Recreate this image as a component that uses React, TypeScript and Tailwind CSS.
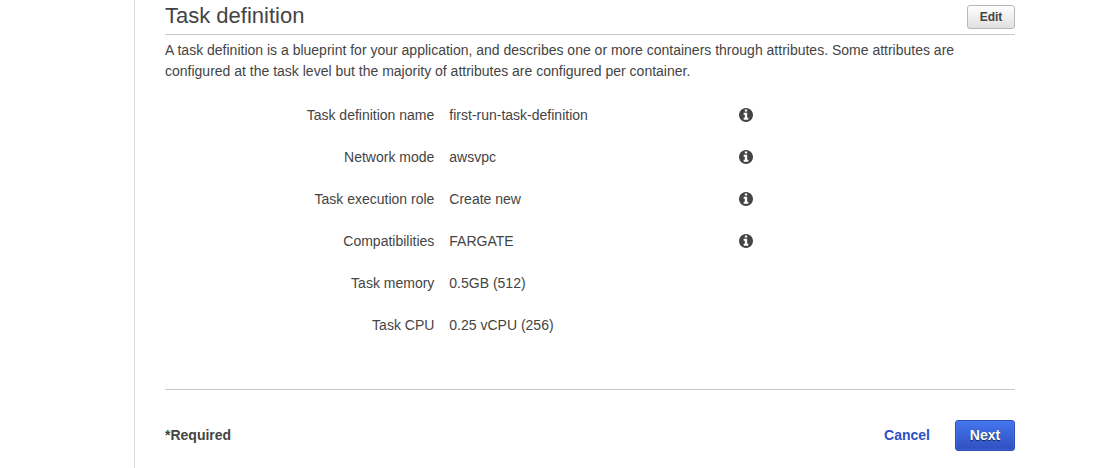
const attributes = [
  { label: 'Task definition name', value: 'first-run-task-definition', info: true },
  { label: 'Network mode', value: 'awsvpc', info: true },
  { label: 'Task execution role', value: 'Create new', info: true },
  { label: 'Compatibilities', value: 'FARGATE', info: true },
  { label: 'Task memory', value: '0.5GB (512)', info: false },
  { label: 'Task CPU', value: '0.25 vCPU (256)', info: false },
];

function InfoIcon() {
  return (
    <svg viewBox="0 0 1536 1536" fill="currentColor" className="size-[14px]" aria-hidden="true">
      <path d="M1024 1248v-160q0-14-9-23t-23-9h-96V544q0-14-9-23t-23-9H544q-14 0-23 9t-9 23v160q0 14 9 23t23 9h96v320h-96q-14 0-23 9t-9 23v160q0 14 9 23t23 9h448q14 0 23-9t9-23zM896 352V192q0-14-9-23t-23-9H672q-14 0-23 9t-9 23v160q0 14 9 23t23 9h192q14 0 23-9t9-23zm640 416q0 209-103 385.500T1153.500 1433 768 1536t-385.500-103T103 1153.500 0 768t103-385.500T382.500 103 768 0t385.500 103T1433 382.500 1536 768z" />
    </svg>
  );
}

function TaskDefinition() {
  return (
    <section>
      <div className="flex h-[35px] items-start justify-between border-b border-[#c8c8c8]">
        <h2 className="text-[22px] leading-8">Task definition</h2>
        <button
          type="button"
          className="mt-[5px] h-6 w-12 rounded-[3px] border border-[#b8b8b8] bg-gradient-to-b from-white to-[#e0e0e0] text-xs font-bold"
        >
          Edit
        </button>
      </div>

      <p className="mt-[5px]">
        A task definition is a blueprint for your application, and describes one or more containers through attributes.
        Some attributes are configured at the task level but the majority of attributes are configured per container.
      </p>

      <dl className="mt-3">
        {attributes.map((attribute) => (
          <div key={attribute.label} className="grid h-[42px] grid-cols-3 items-center">
            <dt className="pr-[14px] text-right">{attribute.label}</dt>
            <dd className="pl-px">{attribute.value}</dd>
            {attribute.info && (
              <dd className="pl-[7px]">
                <button type="button" aria-label={`About ${attribute.label}`} className="block">
                  <InfoIcon />
                </button>
              </dd>
            )}
          </div>
        ))}
      </dl>
    </section>
  );
}

export default function App() {
  return (
    <div className="flex min-h-screen bg-white font-['Liberation_Sans',Arial,sans-serif] text-sm leading-[21px] text-[#444]">
      <div className="w-[134px] shrink-0" />
      <main className="flex-1 border-l border-[#ddd] pr-[91px] pl-[30px]">
        <TaskDefinition />

        <footer className="mt-[43px] flex items-center justify-between border-t border-[#c8c8c8] pt-[30px]">
          <strong>*Required</strong>
          <div className="flex items-center gap-[25px]">
            <a href="#" className="font-bold text-[#2f4fc4]">
              Cancel
            </a>
            <button
              type="button"
              className="h-[31px] w-[60px] rounded-[3px] border border-[#2b4bb5] bg-gradient-to-b from-[#4476ee] to-[#304fc0] font-bold text-white shadow-[inset_0_0_0_1px_rgba(90,140,250,0.3)] [text-shadow:0_1px_1px_rgba(0,0,0,0.6)]"
            >
              Next
            </button>
          </div>
        </footer>
      </main>
    </div>
  );
}
